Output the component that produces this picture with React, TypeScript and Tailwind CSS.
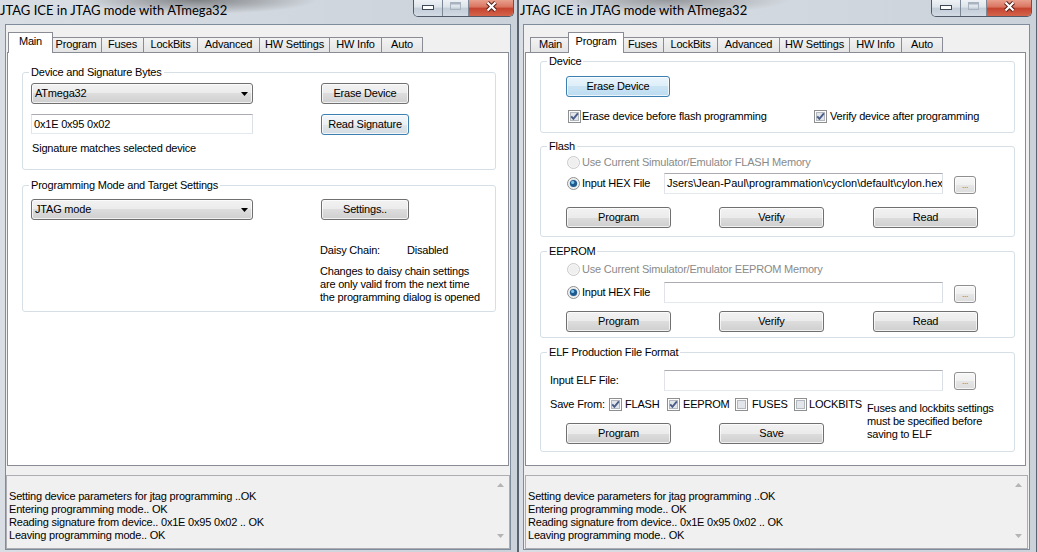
import React from 'react';

type Tone = 'normal' | 'focus' | 'hot';

const SKIN: Record<Tone, string> = {
  normal: 'border-[#707070] bg-[linear-gradient(#f2f2f2_0%,#ebebeb_50%,#dddddd_50%,#cfcfcf_100%)]',
  focus: 'border-[#3c7fb1] bg-[linear-gradient(#f4f7fa_0%,#eaeff3_50%,#dfe6eb_50%,#d4dde3_100%)]',
  hot: 'border-[#3c7fb1] bg-[linear-gradient(#eaf5fc_0%,#ddeef9_50%,#cbe4f4_50%,#bcdcf0_100%)]',
};

const TABS = [
  { label: 'Main', w: 'w-[41px]', ws: 'w-[45px]' },
  { label: 'Program', w: 'w-[52px]', ws: 'w-[56px]' },
  { label: 'Fuses', w: 'w-[43px]', ws: 'w-[47px]' },
  { label: 'LockBits', w: 'w-[55px]', ws: 'w-[59px]' },
  { label: 'Advanced', w: 'w-[63px]', ws: 'w-[67px]' },
  { label: 'HW Settings', w: 'w-[71px]', ws: 'w-[75px]' },
  { label: 'HW Info', w: 'w-[53px]', ws: 'w-[57px]' },
  { label: 'Auto', w: 'w-[42px]', ws: 'w-[46px]' },
];

const LOG = [
  'Setting device parameters for jtag programming ..OK',
  'Entering programming mode.. OK',
  'Reading signature from device.. 0x1E 0x95 0x02 .. OK',
  'Leaving programming mode.. OK',
];

const Button = ({ label, className = '', tone = 'normal' }: { label: string; className?: string; tone?: Tone }) => (
  <div
    className={`flex shrink-0 items-center justify-center rounded-[3px] border shadow-[inset_0_0_0_1px_rgba(255,255,255,0.7)] ${SKIN[tone]} ${className}`}
  >
    {label}
  </div>
);

const Browse = ({ className = '' }: { className?: string }) => (
  <div
    className={`flex h-[18px] w-[22px] shrink-0 items-end justify-center rounded-[3px] border border-[#8f8f8f] bg-[linear-gradient(#f7f7f7_0%,#f0f0f0_50%,#e6e6e6_50%,#dcdcdc_100%)] pb-[3px] text-[8px] leading-[8px] text-[#555] shadow-[inset_0_0_0_1px_rgba(255,255,255,0.7)] ${className}`}
  >
    ...
  </div>
);

const TextBox = ({ value = '', className = '' }: { value?: string; className?: string }) => (
  <div
    className={`flex shrink-0 items-center overflow-hidden whitespace-nowrap border border-[#abadb3] border-b-[#e3e9ef] border-l-[#e2e3ea] border-r-[#dbdfe6] bg-white pl-[2px] ${className}`}
  >
    {value}
  </div>
);

const Combo = ({ value }: { value: string }) => (
  <div className="flex h-[21px] w-[222px] shrink-0 items-center justify-between rounded-[3px] border border-[#707070] bg-[linear-gradient(#f2f2f2_0%,#ebebeb_50%,#dddddd_50%,#cfcfcf_100%)] pl-[3px] pr-[4px] shadow-[inset_0_0_0_1px_rgba(255,255,255,0.7)]">
    <span>{value}</span>
    <svg width="7" height="4" viewBox="0 0 7 4">
      <polygon points="0,0 7,0 3.5,4" fill="#000" />
    </svg>
  </div>
);

const Check = ({ checked = false }: { checked?: boolean }) => (
  <svg width="13" height="13" viewBox="0 0 13 13" className="shrink-0">
    <rect x="0.5" y="0.5" width="12" height="12" fill="#fdfdfd" stroke="#8e8f8f" />
    <rect x="2.5" y="2.5" width="8" height="8" fill="#e2e5e9" stroke="#b3b8be" />
    {checked && <path d="M3.2 6.4 L5.4 8.9 L9.9 3.4" fill="none" stroke="#4a5d8a" strokeWidth="1.9" />}
  </svg>
);

const Radio = ({ checked = false, disabled = false }: { checked?: boolean; disabled?: boolean }) => (
  <svg width="13" height="13" viewBox="0 0 13 13" className="shrink-0">
    <circle cx="6.5" cy="6.5" r="6" fill={disabled ? '#f5f5f5' : '#f3f3f3'} stroke={disabled ? '#c9c9c9' : '#8e8f8f'} />
    <circle cx="6.5" cy="6.5" r="4.4" fill={disabled ? '#efefef' : '#e1e4e8'} />
    {checked && (
      <>
        <circle cx="6.5" cy="6.5" r="3.6" fill="#1d5a8f" />
        <circle cx="5.7" cy="5.4" r="1.6" fill="#7fc3e6" />
      </>
    )}
  </svg>
);

const Group = ({ title, className = '', children }: { title: string; className?: string; children: React.ReactNode }) => (
  <fieldset className={`rounded-[3px] border border-[#d5dfe5] ${className}`}>
    <legend className="ml-[6px] px-[2px] leading-[13px]">{title}</legend>
    {children}
  </fieldset>
);

const RadioRow = ({ label }: { label: string }) => (
  <div className="flex h-[13px] items-center pl-[1px] text-[#8a8a8a]">
    <Radio disabled />
    <span className="ml-[2px]">{label}</span>
  </div>
);

const HexRow = ({ value = '', className = '' }: { value?: string; className?: string }) => (
  <div className={`flex items-start ${className}`}>
    <div className="flex h-[21px] w-[98px] shrink-0 items-center pl-[1px]">
      <Radio checked />
      <span className="ml-[2px]">Input HEX File</span>
    </div>
    <TextBox value={value} className="h-[21px] w-[279px] tracking-normal" />
    <Browse className="ml-[11px] mt-[3px]" />
  </div>
);

const ButtonRow = ({ className = '' }: { className?: string }) => (
  <div className={`flex ${className}`}>
    <Button label="Program" className="h-[21px] w-[105px]" />
    <Button label="Verify" className="ml-[48px] h-[21px] w-[105px]" />
    <Button label="Read" className="ml-[49px] h-[21px] w-[105px]" />
  </div>
);

const MainPage = () => (
  <div className="flex flex-col pl-[14px] pr-[12px] pt-[13px]">
    <Group title="Device and Signature Bytes">
      <div className="flex items-start pb-[14px] pl-[8px] pt-[4px]">
        <div className="flex w-[222px] flex-col">
          <Combo value="ATmega32" />
          <TextBox value="0x1E 0x95 0x02" className="mt-[10px] h-[20px] w-[222px]" />
          <div className="mt-[8px] pl-[1px]">Signature matches selected device</div>
        </div>
        <div className="ml-[68px] flex flex-col">
          <Button label="Erase Device" className="h-[21px] w-[88px]" />
          <Button label="Read Signature" tone="focus" className="mt-[10px] h-[21px] w-[88px]" />
        </div>
      </div>
    </Group>
    <Group title="Programming Mode and Target Settings" className="mt-[9px]">
      <div className="flex items-start pb-[7px] pl-[8px] pt-[7px]">
        <Combo value="JTAG mode" />
        <div className="ml-[68px] flex flex-col">
          <Button label="Settings.." className="h-[21px] w-[88px]" />
          <div className="-ml-[1px] mt-[24px] flex">
            <span className="w-[87px]">Daisy Chain:</span>
            <span>Disabled</span>
          </div>
          <div className="-ml-[1px] mt-[8px] whitespace-nowrap">
            Changes to daisy chain settings
            <br />
            are only valid from the next time
            <br />
            the programming dialog is opened
          </div>
        </div>
      </div>
    </Group>
  </div>
);

const ProgramPage = () => (
  <div className="flex flex-col pl-[14px] pr-[10px] pt-[2px]">
    <Group title="Device">
      <div className="flex flex-col items-start pb-[9px] pl-[25px] pt-[8px]">
        <Button label="Erase Device" tone="hot" className="h-[21px] w-[104px]" />
        <div className="mt-[13px] flex h-[13px] items-center">
          <div className="flex w-[248px] items-center pl-[2px]">
            <Check checked />
            <span className="ml-[1px]">Erase device before flash programming</span>
          </div>
          <Check checked />
          <span className="ml-[3px]">Verify device after programming</span>
        </div>
      </div>
    </Group>

    <Group title="Flash" className="mt-[7px]">
      <div className="flex flex-col pb-[8px] pl-[25px] pt-[3px]">
        <RadioRow label="Use Current Simulator/Emulator FLASH Memory" />
        <HexRow value={'Jsers\\Jean-Paul\\programmation\\cyclon\\default\\cylon.hex'} className="mt-[4px]" />
        <ButtonRow className="mt-[13px]" />
      </div>
    </Group>

    <Group title="EEPROM" className="mt-[8px]">
      <div className="flex flex-col pb-[5px] pl-[25px] pt-[5px]">
        <RadioRow label="Use Current Simulator/Emulator EEPROM Memory" />
        <HexRow className="mt-[6px]" />
        <ButtonRow className="mt-[8px]" />
      </div>
    </Group>

    <Group title="ELF Production File Format" className="mt-[8px]">
      <div className="flex flex-col pb-[7px] pl-[9px] pt-[11px]">
        <div className="flex items-start">
          <div className="flex h-[21px] w-[114px] shrink-0 items-center">Input ELF File:</div>
          <TextBox className="h-[21px] w-[279px]" />
          <Browse className="ml-[11px] mt-[2px]" />
        </div>
        <div className="mt-[7px] flex">
          <div className="flex w-[317px] shrink-0 flex-col">
            <div className="flex h-[13px] items-center whitespace-nowrap">
              <span className="w-[59px] shrink-0">Save From:</span>
              <Check checked />
              <span className="ml-[3px] w-[42px] shrink-0">FLASH</span>
              <Check checked />
              <span className="ml-[3px] w-[52px] shrink-0">EEPROM</span>
              <Check />
              <span className="ml-[4px] w-[42px] shrink-0">FUSES</span>
              <Check />
              <span className="ml-[2px]">LOCKBITS</span>
            </div>
            <div className="mt-[12px] flex pl-[16px]">
              <Button label="Program" className="h-[21px] w-[105px]" />
              <Button label="Save" className="ml-[48px] h-[21px] w-[105px]" />
            </div>
          </div>
          <div className="mt-[4px] whitespace-nowrap">
            Fuses and lockbits settings
            <br />
            must be specified before
            <br />
            saving to ELF
          </div>
        </div>
      </div>
    </Group>
  </div>
);

const TabControl = ({ active, stripPad, className = '', children }: { active: number; stripPad: string; className?: string; children: React.ReactNode }) => (
  <div className={`flex flex-col ${className}`}>
    <div className={`flex h-[20px] items-end ${stripPad}`}>
      {TABS.map((t, i) =>
        i === active ? (
          <div
            key={t.label}
            className={`relative z-10 -mb-[1px] h-[21px] shrink-0 border border-b-0 border-[#898c95] bg-white pt-[2px] text-center ${t.ws} ${i === 0 ? '-ml-[2px]' : '-ml-[3px]'} -mr-[2px]`}
          >
            {t.label}
          </div>
        ) : (
          <div
            key={t.label}
            className={`h-[15px] shrink-0 border border-b-0 border-[#898c95] bg-[linear-gradient(#f3f3f3,#e4e4e4)] text-center ${t.w} ${i === 0 ? '' : '-ml-[1px]'}`}
          >
            {t.label}
          </div>
        )
      )}
    </div>
    <div className="h-[414px] overflow-hidden border border-[#898c95] bg-white">{children}</div>
  </div>
);

const LogBox = ({ className = '' }: { className?: string }) => (
  <div className={`flex h-[74px] border border-[#abadb3] bg-[#f0f0f0] ${className}`}>
    <div className="flex-1 overflow-hidden whitespace-nowrap pl-[2px] pt-[14px]">
      {LOG.map((l) => (
        <div key={l}>{l}</div>
      ))}
    </div>
    <div className="flex w-[17px] flex-col items-center justify-between pb-[10px] pt-[7px]">
      <svg width="7" height="4" viewBox="0 0 7 4">
        <polygon points="0,4 7,4 3.5,0" fill="#b4b4b4" />
      </svg>
      <svg width="7" height="4" viewBox="0 0 7 4">
        <polygon points="0,0 7,0 3.5,4" fill="#b4b4b4" />
      </svg>
    </div>
  </div>
);

const CaptionButtons = ({ className = '' }: { className?: string }) => (
  <div className={`flex h-[17px] w-[101px] shrink-0 overflow-hidden rounded-b-[5px] border border-t-0 border-[#505a68] ${className}`}>
    <div className="flex w-[29px] justify-center border-r border-[#7d8896] bg-[linear-gradient(#eef2f6_0%,#dde3ea_45%,#c3cdd8_50%,#d2dae3_100%)] pt-[5px]">
      <svg width="12" height="5" viewBox="0 0 12 5">
        <rect x="0.5" y="0.5" width="11" height="4" fill="#fff" stroke="#3e4755" />
      </svg>
    </div>
    <div className="flex w-[26px] justify-center border-r border-[#7d8896] bg-[linear-gradient(#eef2f6_0%,#dde3ea_45%,#c3cdd8_50%,#d2dae3_100%)] pt-[2px]">
      <svg width="11" height="8" viewBox="0 0 11 8">
        <rect x="0.5" y="0.5" width="10" height="7" fill="none" stroke="#a9b3bf" />
        <rect x="1" y="1" width="9" height="1.5" fill="#a9b3bf" />
      </svg>
    </div>
    <div className="flex flex-1 justify-center bg-[linear-gradient(#e8a08e_0%,#d9735f_45%,#c5432e_50%,#d4644b_100%)] pt-[1px]">
      <svg width="13" height="11" viewBox="0 0 13 11">
        <path d="M2.5 1.5 L10.5 9.5 M10.5 1.5 L2.5 9.5" stroke="#4d1a12" strokeWidth="4" />
        <path d="M2.5 1.5 L10.5 9.5 M10.5 1.5 L2.5 9.5" stroke="#fff" strokeWidth="2.2" />
      </svg>
    </div>
  </div>
);

const Window = ({
  title,
  frame,
  titleBar,
  titlePad,
  capMargin,
  client,
  children,
}: {
  title: string;
  frame: string;
  titleBar: string;
  titlePad: string;
  capMargin: string;
  client: string;
  children: React.ReactNode;
}) => (
  <div className={`flex h-[552px] shrink-0 flex-col bg-[linear-gradient(90deg,#d9dee4,#cbd2da)] ${frame}`}>
    <div className={`flex h-[24px] shrink-0 items-start ${titleBar}`}>
      <span className={`whitespace-nowrap pt-[3px] font-['Lato',sans-serif] text-[13px] leading-[15px] tracking-normal text-black ${titlePad}`}>
        {title}
      </span>
      <CaptionButtons className={`ml-auto ${capMargin}`} />
    </div>
    <div className={`flex flex-col border border-[#7f8c9b] bg-[#f0f0f0] ${client}`}>{children}</div>
  </div>
);

export default function App() {
  return (
    <div className="flex h-[552px] w-[1037px] overflow-hidden bg-[#c8d0d9] font-['Liberation_Sans',Arial,sans-serif] text-[11px] leading-[13px] tracking-[-0.2px] text-black">
      <Window
        title="JTAG ICE in JTAG mode with ATmega32"
        frame="w-[518px] border-r border-[#59636f]"
        titleBar="bg-[radial-gradient(120px_14px_at_197px_0px,rgba(70,70,70,0.6),rgba(70,70,70,0))]"
        titlePad="pl-0"
        capMargin="mr-[3px]"
        client="ml-[5px] mr-[6px] w-[506px]"
      >
        <TabControl active={0} stripPad="pl-[3px]" className="ml-[1px] mt-[7px] w-[502px]">
          <MainPage />
        </TabControl>
        <LogBox className="mt-[9px] w-[504px]" />
      </Window>
      <Window
        title="JTAG ICE in JTAG mode with ATmega32"
        frame="w-[519px] border-l border-r border-[#59636f]"
        titleBar="bg-[radial-gradient(120px_14px_at_150px_0px,rgba(70,70,70,0.45),rgba(70,70,70,0))]"
        titlePad="pl-[1px]"
        capMargin="mr-[4px]"
        client="ml-[4px] mr-[6px] w-[507px]"
      >
        <TabControl active={1} stripPad="pl-[5px]" className="ml-[1px] mt-[7px] w-[501px]">
          <ProgramPage />
        </TabControl>
        <LogBox className="ml-[1px] mt-[9px] w-[503px]" />
      </Window>
    </div>
  );
}
